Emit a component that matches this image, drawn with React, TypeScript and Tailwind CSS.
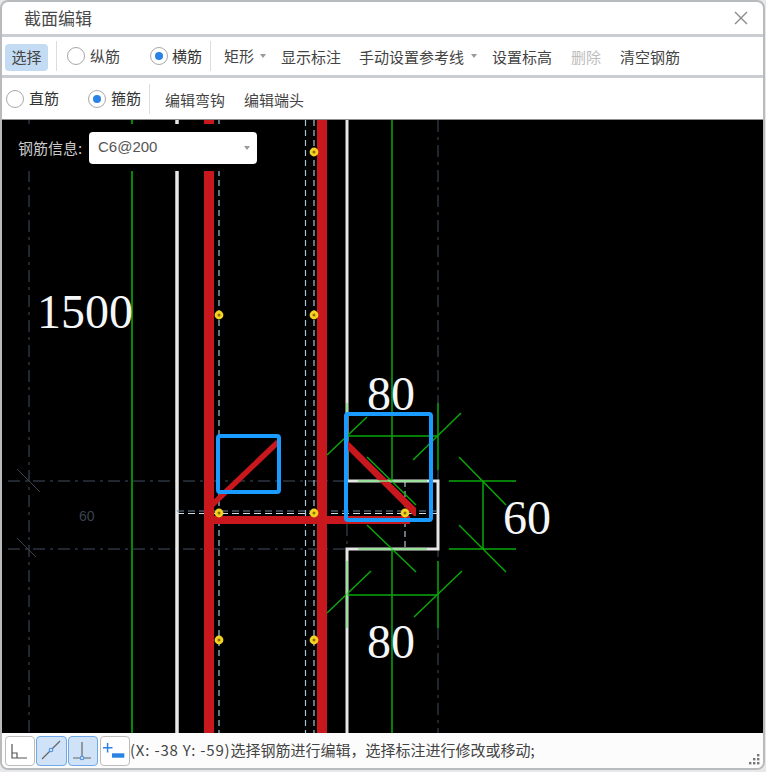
import React from 'react';

const FONT = "font-['Noto_Sans_CJK_SC','Noto_Sans',sans-serif]";

// x1 y1 x2 y2
const greenLines = [
  [392, 120, 392, 481], [392, 549, 392, 733], [347, 436, 437, 436], [347, 595, 437, 595],
  [327, 455, 367, 417], [413, 460, 461, 413], [367, 457, 416, 505], [367, 525, 416, 572],
  [327, 613, 371, 571], [414, 617, 462, 571], [449, 481, 516, 481], [449, 549, 516, 549],
  [483, 481, 483, 549], [459, 457, 506, 505], [459, 525, 506, 572], [438, 403, 438, 470],
  [438, 561, 438, 628],
];
const brightGreen = [
  [358, 481, 427, 481], [358, 549, 427, 549], [347, 403, 347, 470], [347, 561, 347, 628],
];
const darkDash = [
  [29, 120, 29, 733], [8, 481, 347, 481], [8, 549, 347, 549], [438, 120, 438, 403],
  [438, 470, 438, 561], [438, 628, 438, 733], [347, 524, 347, 549],
];
const darkTicks = [
  [17, 469, 40, 492], [17, 538, 36, 557],
];
const dots = [
  [314, 152], [219, 315], [314, 315], [219, 513], [314, 513], [405, 513], [219, 640], [314, 640],
];

function Radio({ on, className }: { on?: boolean; className: string }) {
  return (
    <span className={'flex h-[18px] w-[18px] shrink-0 items-center justify-center rounded-full border-[1.5px] border-[#a8a8a8] bg-white ' + className}>
      {on && <span className="h-[8px] w-[8px] rounded-full bg-[#2a82e4]" />}
    </span>
  );
}

function Caret({ className }: { className: string }) {
  return <span className={'h-0 w-0 border-x-[3px] border-t-[4px] border-x-transparent border-t-[#9a9a9a] ' + className} />;
}

function Cad() {
  return (
    <svg className="absolute inset-0" width="761" height="613" viewBox="2 120 761 613">
      {darkDash.map(([a, b, c, d], i) => (
        <line key={i} x1={a} y1={b} x2={c} y2={d} stroke="#2b3440" strokeWidth="1.5" strokeDasharray="12 5 3 5" />
      ))}
      {darkTicks.map(([a, b, c, d], i) => (
        <line key={i} x1={a} y1={b} x2={c} y2={d} stroke="#38414c" strokeWidth="1" />
      ))}
      <text x="79" y="521" fontSize="14" fill="#3a4350" fontFamily="'Liberation Sans', sans-serif">60</text>

      <line x1="132" y1="120" x2="132" y2="733" stroke="#0ab50a" strokeWidth="1.5" />
      <line x1="177" y1="120" x2="177" y2="733" stroke="#e8e8e8" strokeWidth="3.5" />

      <line x1="219" y1="120" x2="219" y2="733" stroke="#a9c2d6" strokeWidth="1.2" strokeDasharray="6 4" />
      <line x1="305.5" y1="120" x2="305.5" y2="733" stroke="#a9c2d6" strokeWidth="1.2" strokeDasharray="6 4" />
      <line x1="314" y1="120" x2="314" y2="733" stroke="#a9c2d6" strokeWidth="1.2" strokeDasharray="6 4" />
      <line x1="405" y1="481" x2="405" y2="549" stroke="#a9c2d6" strokeWidth="1.2" strokeDasharray="6 4" />

      {/* white outline */}
      <path d="M347 120V481H438V549H347V733" fill="none" stroke="#e6e6e6" strokeWidth="3" />

      <line x1="177" y1="511" x2="437" y2="511" stroke="#6f8aa4" strokeWidth="1.2" strokeDasharray="7 4" />
      <line x1="177" y1="513.5" x2="437" y2="513.5" stroke="#cfdce8" strokeWidth="1.2" strokeDasharray="7 4" />

      {/* rebar */}
      <rect x="204" y="120" width="10" height="613" fill="#c9171e" />
      <rect x="317" y="120" width="10" height="613" fill="#c9171e" />
      <rect x="204" y="516" width="206" height="8" fill="#c9171e" />
      <line x1="212" y1="505" x2="278" y2="442" stroke="#c9171e" strokeWidth="5.5" />
      <path d="M347 440L416 508V516H414L347 449Z" fill="#c9171e" />

      {greenLines.map(([a, b, c, d], i) => (
        <line key={i} x1={a} y1={b} x2={c} y2={d} stroke="#0aa80a" strokeWidth="1.5" />
      ))}
      {brightGreen.map(([a, b, c, d], i) => (
        <line key={i} x1={a} y1={b} x2={c} y2={d} stroke="#7fe07f" strokeWidth="1.5" />
      ))}

      {dots.map(([x, y], i) => (
        <g key={i}>
          <circle cx={x} cy={y} r="4.4" fill="#f5d320" />
          <circle cx={x} cy={y} r="1.5" fill="#8a6d10" />
        </g>
      ))}

      {/* selection boxes */}
      <rect x="218" y="436" width="61" height="56" rx="2" fill="none" stroke="#1a9bff" strokeWidth="4" />
      <rect x="346" y="414" width="85" height="106" rx="2" fill="none" stroke="#1a9bff" strokeWidth="4" />

      <g fill="#f4f6f8" fontSize="48" fontFamily="'Liberation Serif', serif">
        <text x="37" y="328">1500</text>
        <text x="367" y="410">80</text>
        <text x="503" y="534">60</text>
        <text x="367" y="658">80</text>
      </g>
    </svg>
  );
}

function ToolIcon({ active, children }: { active?: boolean; children: React.ReactNode }) {
  return (
    <div className={'flex h-[30px] shrink-0 items-center justify-center rounded-[4px] border-[1.5px] ' + (active ? 'border-[#6ea8e6] bg-[#cfe2f7]' : 'border-[#bdbdbd] bg-white')}>
      <svg width="26" height="26" viewBox="0 0 26 26" fill="none">{children}</svg>
    </div>
  );
}

export default function App() {
  return (
    <div className={'h-[772px] w-[766px] bg-[#e8e8e8] ' + FONT}>
      <div className="flex h-[770px] w-[765px] flex-col overflow-hidden rounded-[8px] border-2 border-[#b8bbbe] bg-white text-[15px] text-[#444]">
        {/* title */}
        <div className="flex h-[32px] shrink-0 items-center justify-between pl-[22px] pr-[15px]">
          <span className="pb-[2px] text-[17px] leading-none text-[#4a4a4a]">截面编辑</span>
          <svg width="14" height="14" viewBox="0 0 14 14" stroke="#8a8a8a" strokeWidth="1.4">
            <path d="M1 1L13 13M13 1L1 13" />
          </svg>
        </div>
        <div className="h-[3px] shrink-0 bg-[#c9ccd0]" />

        {/* toolbar 1 */}
        <div className="flex h-[38px] shrink-0 items-center whitespace-nowrap pl-[3px]">
          <div className="mt-[2px] flex h-[27px] w-[43px] items-center justify-center rounded-[4px] bg-[#c3dbf3]">选择</div>
          <div className="ml-[8px] h-[30px] w-px bg-[#dcdcdc]" />
          <Radio className="ml-[10px] mb-[1px]" />
          <span className="ml-[5px]">纵筋</span>
          <Radio on className="ml-[30px] mb-[1px]" />
          <span className="ml-[4px] text-[#333]">横筋</span>
          <div className="ml-[8px] h-[30px] w-px bg-[#dcdcdc]" />
          <span className="ml-[13px]">矩形</span>
          <Caret className="ml-[6px]" />
          <span className="ml-[15px] mt-[2px]">显示标注</span>
          <span className="ml-[18px] mt-[2px]">手动设置参考线</span>
          <Caret className="ml-[7px]" />
          <span className="ml-[15px] mt-[2px]">设置标高</span>
          <span className="ml-[19px] mt-[2px] text-[#bdbdbd]">删除</span>
          <span className="ml-[19px] mt-[2px]">清空钢筋</span>
        </div>
        <div className="h-[3px] shrink-0 bg-[#c9ccd0]" />

        {/* toolbar 2 */}
        <div className="flex h-[41px] shrink-0 items-center whitespace-nowrap pl-[4px]">
          <Radio className="" />
          <span className="ml-[5px] text-[#333]">直筋</span>
          <Radio on className="ml-[29px]" />
          <span className="ml-[5px] text-[#333]">箍筋</span>
          <div className="ml-[8px] h-[30px] w-px bg-[#dcdcdc]" />
          <span className="ml-[15px] mt-[4px]">编辑弯钩</span>
          <span className="ml-[19px] mt-[4px]">编辑端头</span>
        </div>
        <div className="h-px shrink-0 bg-[#8f8f8f]" />

        {/* drawing */}
        <div className="relative h-[613px] shrink-0 overflow-hidden bg-black">
          <Cad />
          <div className="absolute left-0 top-[4px] flex h-[47px] w-[258px] items-center bg-black pl-[16px]">
            <span className="mt-[2px] w-[71px] text-[15px] text-[#c9c9c9]">钢筋信息:</span>
            <div className="flex h-[32px] w-[168px] items-center justify-between rounded-[4px] bg-white pl-[9px] pr-[7px] text-[#555] font-['Liberation_Sans',sans-serif] text-[15px]">
              C6@200
              <Caret className="" />
            </div>
          </div>
        </div>

        {/* status */}
        <div className="relative flex h-[35px] shrink-0 items-center bg-[#fcfcfc] pl-[3px]">
          <div className="flex items-center gap-px">
            <div className="w-[30px]">
              <ToolIcon>
                <path d="M5 6V20H20M5 15H10V20" stroke="#555" strokeWidth="1.2" />
              </ToolIcon>
            </div>
            <div className="w-[31px]">
              <ToolIcon active>
                <path d="M3 21L21 3" stroke="#666" strokeWidth="1.2" />
                <circle cx="12" cy="12" r="1.8" stroke="#4a90e2" strokeWidth="1.1" fill="#cfe2f7" />
              </ToolIcon>
            </div>
            <div className="w-[30px]">
              <ToolIcon active>
                <path d="M12 4V20M3 20H21" stroke="#666" strokeWidth="1.2" />
                <circle cx="12" cy="20" r="1.8" stroke="#4a90e2" strokeWidth="1.1" fill="#cfe2f7" />
              </ToolIcon>
            </div>
            <div className="ml-px w-[30px]">
              <ToolIcon>
                <path d="M5.6 5V14.5M1 9.7H10.5" stroke="#2a82e4" strokeWidth="1.5" />
                <rect x="10" y="15.3" width="12.3" height="4.4" fill="#2a82e4" />
              </ToolIcon>
            </div>
          </div>
          <span className="whitespace-nowrap text-[15px] text-[#444]">
            <span className="tracking-[0.8px]">(X: -38 Y: -59)</span>选择钢筋进行编辑，选择标注进行修改或移动;
          </span>
          <svg className="absolute bottom-[2px] right-[3px]" width="12" height="12" viewBox="0 0 12 12" fill="#777">
            <rect x="9" y="0" width="2.4" height="2.4" />
            <rect x="5" y="4" width="2.4" height="2.4" />
            <rect x="9" y="4" width="2.4" height="2.4" />
            <rect x="1" y="8" width="2.4" height="2.4" />
            <rect x="5" y="8" width="2.4" height="2.4" />
            <rect x="9" y="8" width="2.4" height="2.4" />
          </svg>
        </div>
      </div>
    </div>
  );
}
